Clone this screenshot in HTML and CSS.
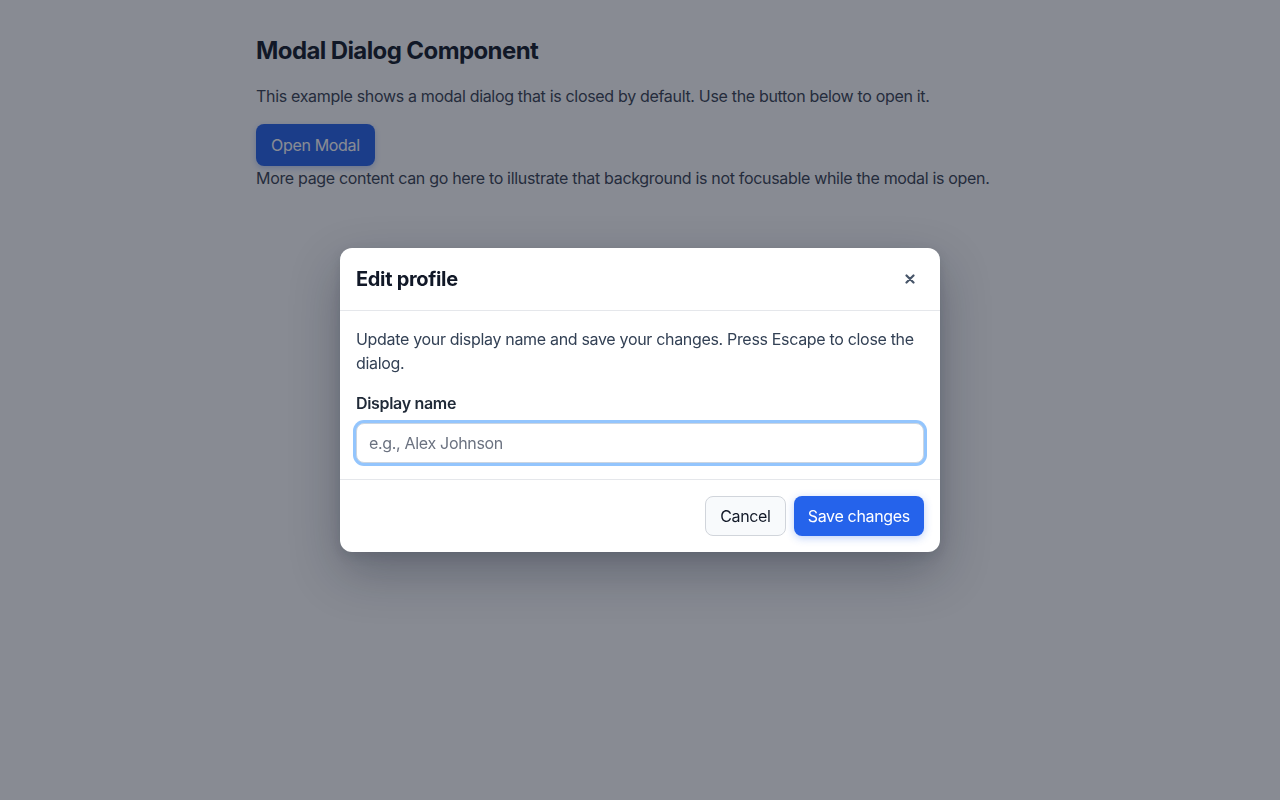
FILE: index.html
```html
<!DOCTYPE html>
<html lang="en">
<head>
<meta charset="utf-8">
<title>Modal Dialog Component</title>
<link rel="stylesheet" href="styles.css">
</head>
<body>
<main class="page">
  <h1 class="page-title">Modal Dialog Component</h1>
  <p class="page-text gap">This example shows a modal dialog that is closed by default. Use the button below to open it.</p>
  <button class="btn-open" type="button">Open Modal</button>
  <p class="page-text">More page content can go here to illustrate that background is not focusable while the modal is open.</p>
</main>
<div class="overlay">
  <div class="modal" role="dialog" aria-modal="true" aria-labelledby="mt">
    <div class="modal-header">
      <h2 class="modal-title" id="mt">Edit profile</h2>
      <button class="close" type="button" aria-label="Close">
        <svg width="10" height="10" viewBox="0 0 10 10"><path d="M1.5 1.5L8.5 8.5M8.5 1.5L1.5 8.5" stroke="#475569" stroke-width="2.2" stroke-linecap="round"/></svg>
      </button>
    </div>
    <div class="modal-body">
      <p class="modal-text">Update your display name and save your changes. Press Escape to close the dialog.</p>
      <label class="label" for="dn">Display name</label>
      <input class="input" id="dn" type="text" placeholder="e.g., Alex Johnson">
    </div>
    <div class="modal-footer">
      <button class="btn-cancel" type="button">Cancel</button>
      <button class="btn-save" type="button">Save changes</button>
    </div>
  </div>
</div>
</body>
</html>
```
FILE: styles.css
```css
* { box-sizing: border-box; }
html, body { margin: 0; padding: 0; }
body {
  font-family: Inter, "Noto Sans", "Liberation Sans", sans-serif;
  letter-spacing: -0.02em;
  background: #ffffff;
  color: #1f2937;
  width: 1280px;
  height: 800px;
  overflow: hidden;
}
.page {
  max-width: 768px;
  margin: 0 auto;
  padding-top: 33px;
}
.page-title {
  margin: 0 0 15px;
  font-size: 24px;
  line-height: 36px;
  font-weight: 700;
  letter-spacing: -0.025em;
  color: #111827;
}
.page-text {
  margin: 0;
  font-size: 16px;
  line-height: 24px;
  color: #374151;
}
.page-text.gap { margin-bottom: 16px; }
.btn-open {
  font-family: inherit;
  letter-spacing: inherit;
  font-size: 16px;
  line-height: 22px;
  padding: 10px 15px;
  border: 0;
  border-radius: 8px;
  background: #2563eb;
  color: #ffffff;
  box-shadow: 0 2px 6px rgba(37, 99, 235, 0.3);
  display: block;
}
.overlay {
  position: fixed;
  inset: 0;
  background: rgba(17, 24, 39, 0.5);
  display: flex;
  align-items: center;
  justify-content: center;
}
.modal {
  width: 600px;
  background: #ffffff;
  border-radius: 12px;
  box-shadow: 0 20px 50px rgba(15, 23, 42, 0.3), 0 4px 12px rgba(15, 23, 42, 0.12);
  overflow: hidden;
}
.modal-header {
  display: flex;
  align-items: center;
  justify-content: space-between;
  padding: 16px;
  border-bottom: 1px solid #e5e7eb;
  height: 63px;
}
.modal-title {
  margin: 0;
  font-size: 20px;
  line-height: 28px;
  font-weight: 700;
  color: #111827;
}
.close {
  width: 30px;
  height: 30px;
  border: 0;
  background: transparent;
  border-radius: 6px;
  display: flex;
  align-items: center;
  justify-content: center;
  padding: 0;
  margin-right: -1px;
}
.modal-body {
  padding: 16px;
  display: flex;
  flex-direction: column;
}
.modal-text {
  margin: 0 0 16px;
  font-size: 16px;
  line-height: 24px;
  color: #334155;
}
.label {
  font-size: 16px;
  line-height: 24px;
  font-weight: 600;
  color: #1f2937;
  margin-bottom: 8px;
}
.input {
  height: 40px;
  width: 100%;
  font-family: inherit;
  letter-spacing: inherit;
  font-size: 16px;
  padding: 0 12px;
  border: 1px solid #cbd5e1;
  border-radius: 8px;
  outline: none;
  box-shadow: 0 0 0 3px #93c5fd;
  color: #111827;
}
.input::placeholder { color: #6b7280; }
.modal-footer {
  border-top: 1px solid #e5e7eb;
  padding: 16px;
  display: flex;
  justify-content: flex-end;
  gap: 8px;
}
.btn-cancel, .btn-save {
  font-family: inherit;
  letter-spacing: inherit;
  font-size: 16px;
  height: 40px;
  padding: 0 14px;
  border-radius: 8px;
}
.btn-cancel {
  background: #f8fafc;
  border: 1px solid #d1d5db;
  color: #111827;
}
.btn-save {
  background: #2563eb;
  border: 0;
  color: #ffffff;
  box-shadow: 0 2px 8px rgba(37, 99, 235, 0.3);
}
```
